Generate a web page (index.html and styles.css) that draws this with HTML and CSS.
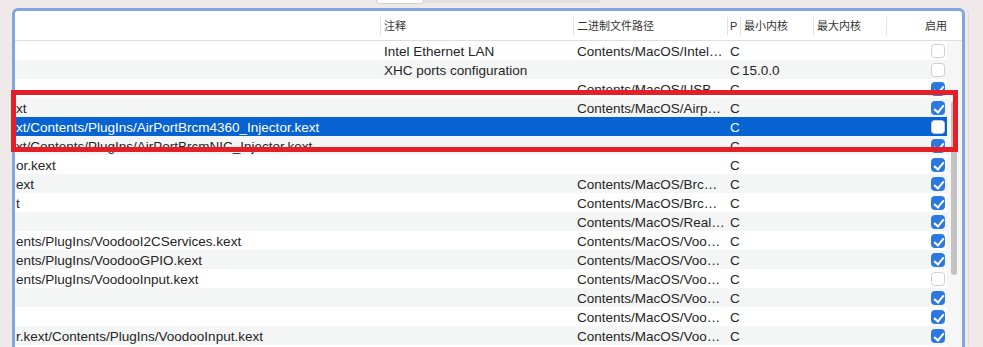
FILE: index.html
```html
<!DOCTYPE html>
<html lang="zh">
<head>
<meta charset="utf-8">
<title>Kernel Add</title>
<link rel="stylesheet" href="styles.css">
</head>
<body>
<div class="topbar"><div class="seg"></div><div class="seg-rest"></div></div>
<div class="frame">
  <div class="head">
    <div class="hc"></div>
    <div class="hc sep">注释</div>
    <div class="hc sep">二进制文件路径</div>
    <div class="hc sep p">P</div>
    <div class="hc sep">最小内核</div>
    <div class="hc sep">最大内核</div>
    <div class="hc sep right">启用</div>
    <div class="hc"></div>
  </div>
  <div class="tbody">
    <div class="rows">
      <div class="row"><span class="name"></span><span class="note">Intel Ethernet LAN</span><span class="path">Contents/MacOS/Intel…</span><span class="pc">C</span><span class="min"></span><span class="max"></span><span class="en"><i class="cb"></i></span></div>
      <div class="row alt"><span class="name"></span><span class="note">XHC ports configuration</span><span class="path"></span><span class="pc">C</span><span class="min">15.0.0</span><span class="max"></span><span class="en"><i class="cb"></i></span></div>
      <div class="row"><span class="name"></span><span class="note"></span><span class="path">Contents/MacOS/USB…</span><span class="pc">C</span><span class="min"></span><span class="max"></span><span class="en"><i class="cb on"></i></span></div>
      <div class="row alt"><span class="name">xt</span><span class="note"></span><span class="path">Contents/MacOS/Airp…</span><span class="pc">C</span><span class="min"></span><span class="max"></span><span class="en"><i class="cb on"></i></span></div>
      <div class="row sel"><span class="name">xt/Contents/PlugIns/AirPortBrcm4360_Injector.kext</span><span class="note"></span><span class="path"></span><span class="pc">C</span><span class="min"></span><span class="max"></span><span class="en"><i class="cb"></i></span></div>
      <div class="row alt"><span class="name">xt/Contents/PlugIns/AirPortBrcmNIC_Injector.kext</span><span class="note"></span><span class="path"></span><span class="pc">C</span><span class="min"></span><span class="max"></span><span class="en"><i class="cb on"></i></span></div>
      <div class="row"><span class="name">or.kext</span><span class="note"></span><span class="path"></span><span class="pc">C</span><span class="min"></span><span class="max"></span><span class="en"><i class="cb on"></i></span></div>
      <div class="row alt"><span class="name">ext</span><span class="note"></span><span class="path">Contents/MacOS/Brc…</span><span class="pc">C</span><span class="min"></span><span class="max"></span><span class="en"><i class="cb on"></i></span></div>
      <div class="row"><span class="name">t</span><span class="note"></span><span class="path">Contents/MacOS/Brc…</span><span class="pc">C</span><span class="min"></span><span class="max"></span><span class="en"><i class="cb on"></i></span></div>
      <div class="row alt"><span class="name"></span><span class="note"></span><span class="path">Contents/MacOS/Real…</span><span class="pc">C</span><span class="min"></span><span class="max"></span><span class="en"><i class="cb on"></i></span></div>
      <div class="row"><span class="name">ents/PlugIns/VoodooI2CServices.kext</span><span class="note"></span><span class="path">Contents/MacOS/Voo…</span><span class="pc">C</span><span class="min"></span><span class="max"></span><span class="en"><i class="cb on"></i></span></div>
      <div class="row alt"><span class="name">ents/PlugIns/VoodooGPIO.kext</span><span class="note"></span><span class="path">Contents/MacOS/Voo…</span><span class="pc">C</span><span class="min"></span><span class="max"></span><span class="en"><i class="cb on"></i></span></div>
      <div class="row"><span class="name">ents/PlugIns/VoodooInput.kext</span><span class="note"></span><span class="path">Contents/MacOS/Voo…</span><span class="pc">C</span><span class="min"></span><span class="max"></span><span class="en"><i class="cb"></i></span></div>
      <div class="row alt"><span class="name"></span><span class="note"></span><span class="path">Contents/MacOS/Voo…</span><span class="pc">C</span><span class="min"></span><span class="max"></span><span class="en"><i class="cb on"></i></span></div>
      <div class="row"><span class="name"></span><span class="note"></span><span class="path">Contents/MacOS/Voo…</span><span class="pc">C</span><span class="min"></span><span class="max"></span><span class="en"><i class="cb on"></i></span></div>
      <div class="row alt"><span class="name">r.kext/Contents/PlugIns/VoodooInput.kext</span><span class="note"></span><span class="path">Contents/MacOS/Voo…</span><span class="pc">C</span><span class="min"></span><span class="max"></span><span class="en"><i class="cb on"></i></span></div>
    </div>
    <div class="scroll"><div class="thumb"></div></div>
  </div>
</div>
<div class="mark"></div>
</body>
</html>
```
FILE: styles.css
```css
* { box-sizing: border-box; }
html, body { margin: 0; padding: 0; }
body {
  background: #efe9ea;
  height: 347px;
  overflow: hidden;
  font-family: "Liberation Sans", Arial, "Noto Sans CJK SC", sans-serif;
  color: #252525;
  position: relative;
}
.topbar {
  height: 8px;
  display: flex;
  padding-left: 376px;
}
.seg {
  width: 48px;
  height: 4px;
  background: #fff;
  border: 1px solid #d8d1d1;
  border-top: 0;
  border-radius: 0 0 6px 6px;
}
.seg-rest {
  width: 176px;
  height: 3px;
  background: #e3dddd;
}
.frame {
  margin-left: 12px;
  width: 953px;
  height: 339px;
  border: 3px solid #7fa7de;
  border-bottom: 0;
  border-radius: 6px 6px 0 0;
  background: #fff;
  overflow: hidden;
  box-shadow: 4px 0 0 -1px #efe9ea, 5px 0 0 -1px #e3dbdc;
}
.head {
  display: grid;
  grid-template-columns: 365px 193px 154px 13px 73px 73px 61px 15px;
  height: 30px;
  border-bottom: 1px solid #dedede;
  align-items: center;
  font-family: "Liberation Sans", "Noto Sans CJK SC", sans-serif;
  font-size: 11px;
  color: #333;
}
.hc {
  height: 18px;
  line-height: 18px;
  padding-left: 3px;
  white-space: nowrap;
  overflow: hidden;
}
.hc.sep { border-left: 1px solid #e2e2e2; }
.hc.p { padding-left: 2px; }
.hc.right { text-align: right; padding-right: 0; }
.tbody {
  display: flex;
  height: 306px;
}
.rows {
  width: 932px;
}
.row {
  display: grid;
  grid-template-columns: 365px 193px 154px 13px 73px 73px 61px;
  height: 19px;
  line-height: 19px;
  font-size: 13.5px;
  background: #fff;
}
.row.alt { background: #f4f5f5; }
.row.sel { background: #0663d1; color: #fff; }
.row > span {
  white-space: nowrap;
  overflow: hidden;
  padding-top: 1px;
}
.name { padding-left: 1px; }
.note { padding-left: 4px; }
.path { padding-left: 4px; }
.pc { padding-left: 3px; overflow: visible !important; }
.min { padding-left: 2px; }
.en {
  display: flex;
  justify-content: flex-end;
  align-items: center;
  padding-right: 2px;
  padding-top: 0 !important;
}
.cb {
  display: block;
  width: 14px;
  height: 14px;
  border-radius: 3.5px;
  background: #fff;
  border: 1px solid #cfcfcf;
  position: relative;
}
.cb.on {
  background: #2b78e0;
  border-color: #2b78e0;
}
.cb.on::after {
  content: "";
  position: absolute;
  left: 4px;
  top: 1px;
  width: 4px;
  height: 8px;
  border: solid #fff;
  border-width: 0 2px 2px 0;
  transform: rotate(40deg);
}
.scroll {
  width: 15px;
  background: #f6f6f6;
  padding-left: 4px;
  padding-top: 60px;
}
.thumb {
  width: 6px;
  height: 174px;
  border-radius: 3px;
  background: #c2c2c2;
}
.mark {
  position: absolute;
  left: 11px;
  top: 90px;
  width: 947px;
  height: 62px;
  border: 5px solid #e41f28;
}
```
